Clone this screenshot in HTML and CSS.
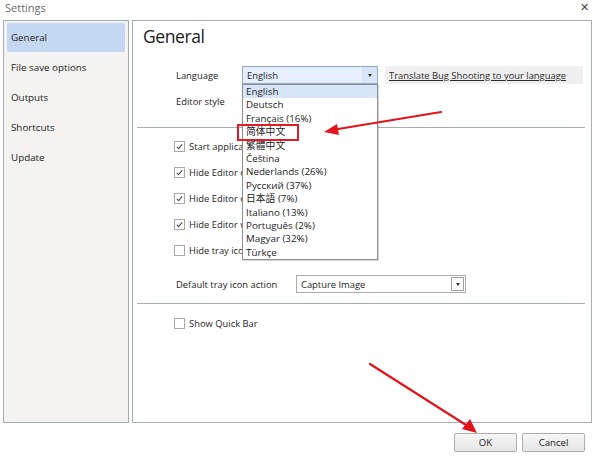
FILE: index.html
```html
<!DOCTYPE html>
<html>
<head>
<meta charset="utf-8">
<link rel="stylesheet" href="styles.css">
</head>
<body>
<div class="window">
  <div class="titlebar">
    <span class="title">Settings</span>
    <span class="close">✕</span>
  </div>
  <div class="main">
    <nav class="sidebar">
      <div class="nav-item active">General</div>
      <div class="nav-item">File save options</div>
      <div class="nav-item">Outputs</div>
      <div class="nav-item">Shortcuts</div>
      <div class="nav-item">Update</div>
    </nav>
    <section class="content">
      <h1 class="heading">General</h1>
      <div class="form">
        <div class="row row-lang">
          <span class="label">Language</span>
          <div class="combo combo-lang">
            <span class="combo-text">English</span>
            <span class="combo-btn focused"><span class="tri"></span></span>
            <ul class="droplist">
              <li class="hl">English</li>
              <li>Deutsch</li>
              <li>Français (16%)</li>
              <li class="marked">简体中文</li>
              <li>繁體中文</li>
              <li>Čeština</li>
              <li>Nederlands (26%)</li>
              <li>Русский (37%)</li>
              <li>日本語 (7%)</li>
              <li>Italiano (13%)</li>
              <li>Português (2%)</li>
              <li>Magyar (32%)</li>
              <li>Türkçe</li>
            </ul>
          </div>
          <div class="link-box"><span class="link">Translate Bug Shooting to your language</span></div>
        </div>
        <div class="row row-style">
          <span class="label">Editor style</span>
        </div>
      </div>
      <hr class="sep sep1">
      <div class="checks">
        <div class="check"><span class="box checked"></span><span class="clip">Start applica</span></div>
        <div class="check"><span class="box checked"></span><span class="clip">Hide Editor o</span></div>
        <div class="check"><span class="box checked"></span><span class="clip">Hide Editor o</span></div>
        <div class="check"><span class="box checked"></span><span class="clip">Hide Editor w</span></div>
        <div class="check"><span class="box"></span><span class="clip">Hide tray ico</span></div>
      </div>
      <div class="row row-tray">
        <span class="label label-wide">Default tray icon action</span>
        <div class="combo combo-tray">
          <span class="combo-text">Capture Image</span>
          <span class="combo-btn plain"><span class="tri"></span></span>
        </div>
      </div>
      <hr class="sep sep2">
      <div class="check check-quick"><span class="box"></span><span>Show Quick Bar</span></div>
    </section>
  </div>
  <div class="footer">
    <button class="btn">OK</button>
    <button class="btn">Cancel</button>
  </div>
  <svg class="annot" width="595" height="463" viewBox="0 0 595 463">
    <line x1="441" y1="112" x2="335" y2="129.5" stroke="#e0141a" stroke-width="2.2" stroke-linecap="round"/>
    <polygon points="324,132 337,124 339,135" fill="#e0141a"/>
    <line x1="370" y1="364" x2="466" y2="425" stroke="#e0141a" stroke-width="2.2" stroke-linecap="round"/>
    <polygon points="477,433 462,429 470,419" fill="#e0141a"/>
  </svg>
</div>
</body>
</html>
```

FILE: styles.css
```css
* { box-sizing: border-box; }
html, body { margin: 0; padding: 0; background: #fff; }
body {
  font-family: "Open Sans", "Noto Sans", "Noto Sans CJK SC", sans-serif;
  font-size: 9.4px;
  color: #1e1e1e;
}
.window {
  position: relative;
  width: 595px;
  height: 463px;
  overflow: hidden;
  display: flex;
  flex-direction: column;
}
.titlebar {
  height: 20px;
  display: flex;
  justify-content: space-between;
  align-items: flex-start;
  padding: 0 6px 0 5px;
}
.title { font-size: 11px; color: #6a6a6a; line-height: 16px; }
.close { font-size: 11px; color: #444; line-height: 14px; }
.main {
  display: flex;
  gap: 3px;
  padding: 0 3px;
  height: 403px;
}
.sidebar {
  width: 126px;
  flex: none;
  background: #f4f3f1;
  border: 1px solid #a6adb5;
  padding: 2px 3px;
}
.nav-item {
  height: 30px;
  line-height: 30px;
  padding-left: 4px;
  color: #222;
  font-size: 9.8px;
}
.nav-item.active {
  background: #c4d8f2;
  border-radius: 2px;
  height: 29px;
  margin-bottom: 1px;
  line-height: 29px;
}
.content {
  flex: 1;
  border: 1px solid #a6adb5;
  background: #fff;
  padding: 0;
}
.heading {
  margin: 0 0 0 10px;
  height: 30px;
  font-weight: 400;
  font-size: 17.5px;
  letter-spacing: -0.4px;
  line-height: 30px;
  color: #1a1a1a;
}
.form { padding-left: 43px; margin-top: 15px; }
.row { display: flex; align-items: center; height: 18px; }
.row-style { margin-top: 8px; }
.label { width: 66px; flex: none; color: #222; }
.combo {
  position: relative;
  height: 18px;
  border: 1px solid #a8b6c8;
  display: flex;
  align-items: center;
}
.combo-lang { width: 136px; background: #e6effb; border-color: #8fa9cc; }
.combo-text { flex: 1; padding-left: 4px; }
.combo-btn {
  width: 15px;
  height: 16px;
  display: flex;
  align-items: center;
  justify-content: center;
}
.combo-btn.focused { background: #d7e5f7; }
.combo-btn.plain { width: 13px; height: 14px; border: 1px solid #9aa0a6; margin-right: 1px; background: #fbfbfb; }
.tri {
  width: 0; height: 0;
  border-left: 2.5px solid transparent;
  border-right: 2.5px solid transparent;
  border-top: 3px solid #333;
}
.droplist {
  position: absolute;
  left: -1px;
  top: 17px;
  width: 136px;
  margin: 0;
  padding: 0;
  list-style: none;
  background: #fff;
  border: 1px solid #8a8e94;
  box-shadow: 1px 1px 1px rgba(0,0,0,0.15);
  z-index: 5;
  font-size: 9.8px;
}
.droplist li {
  height: 13.4px;
  line-height: 13.4px;
  padding-left: 3px;
  color: #222;
  white-space: nowrap;
}
.droplist li.hl { background: #d6e6f8; }
.droplist li.marked { position: relative; }
.droplist li.marked::after {
  content: "";
  box-sizing: border-box;
  position: absolute;
  left: -6px;
  top: -1px;
  width: 62px;
  height: 17px;
  border: 2px solid #e31b23;
}
.link-box {
  margin-left: 7px;
  width: 198px;
  height: 18px;
  background: #efefef;
  display: flex;
  align-items: center;
  padding-left: 4px;
}
.link { text-decoration: underline; color: #2a2a2a; }
.sep {
  border: none;
  border-top: 1px solid #a6adb5;
  margin: 0 6px 0 4px;
  height: 0;
}
.sep1 { margin-top: 17px; }
.checks { padding-left: 41px; margin-top: 12px; }
.check {
  display: flex;
  align-items: center;
  gap: 4px;
  height: 12px;
  margin-bottom: 14px;
  white-space: nowrap;
}
.clip { display: inline-block; width: 54px; overflow: hidden; }
.box {
  width: 11px;
  height: 11px;
  border: 1px solid #a9a9a9;
  flex: none;
  position: relative;
  background: #fff;
}
.box.checked::after {
  content: "";
  position: absolute;
  left: 3px;
  top: 1px;
  width: 2px;
  height: 5px;
  border-right: 1.3px solid #444;
  border-bottom: 1.3px solid #444;
  transform: rotate(40deg);
}
.row-tray { padding-left: 43px; margin-top: 19px; }
.label-wide { width: 120px; }
.combo-tray { width: 170px; background: #fff; border-color: #abadb3; }
.sep2 { margin-top: 10px; }
.check-quick { padding-left: 41px; margin-top: 13px; }
.footer {
  flex: 1;
  display: flex;
  justify-content: flex-end;
  align-items: flex-start;
  gap: 5px;
  padding: 10px 10px 0 0;
}
.btn {
  width: 63px;
  height: 19px;
  font-family: inherit;
  font-size: 9.6px;
  color: #222;
  background: linear-gradient(#f6f6f6, #e6e6e6);
  border: 1px solid #adadad;
  border-radius: 2px;
  padding: 0;
}
.annot {
  position: absolute;
  left: 0;
  top: 0;
  pointer-events: none;
  z-index: 10;
}
```
